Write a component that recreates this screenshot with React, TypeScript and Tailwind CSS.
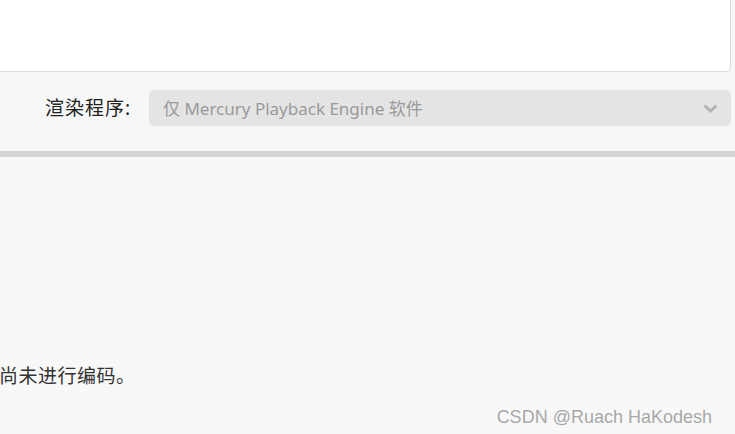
export default function App() {
  return (
    <div className="relative h-[434px] w-[735px] overflow-hidden bg-[#f7f7f7] font-['Noto_Sans','Noto_Sans_CJK_SC',sans-serif]">
      {/* top white panel, its left side runs off screen */}
      <div className="-ml-4 mr-[4px] h-[72px] rounded-br-[5px] border border-t-0 border-[#dcdcdc] bg-white" />

      <div className="flex h-[79px] items-start pt-[18px]">
        <span className="flex h-[36px] w-[149px] items-center pl-[45px] text-[19px] tracking-[1px] text-[#222]">渲染程序:</span>
        <div className="mr-[4px] flex h-[36px] flex-1 items-center justify-between rounded-[5px] bg-[#e4e4e4] pl-[14px] pr-[13px]">
          <span className="pt-[2px] text-[17px] text-[#9a9a9a]">仅 Mercury Playback Engine 软件</span>
          <svg width="15" height="9" viewBox="0 0 15 9" className="mt-[1px]">
            <polyline points="1.5,1.5 7.5,7 13.5,1.5" fill="none" stroke="#b2b2b2" strokeWidth="3" />
          </svg>
        </div>
      </div>

      <div className="h-[6px] bg-[#d3d3d3]" />

      <div className="h-[277px] bg-[#f8f8f8] pt-[206px]">
        <p className="-ml-[1px] text-[19px] leading-[26px] tracking-[0.5px] text-[#333]">尚未进行编码。</p>
        <p className="mt-[17px] pr-[23px] text-right font-['Liberation_Sans',sans-serif] text-[18px] leading-[22px] text-[#a8a8a8]">
          CSDN @Ruach HaKodesh
        </p>
      </div>
    </div>
  );
}
